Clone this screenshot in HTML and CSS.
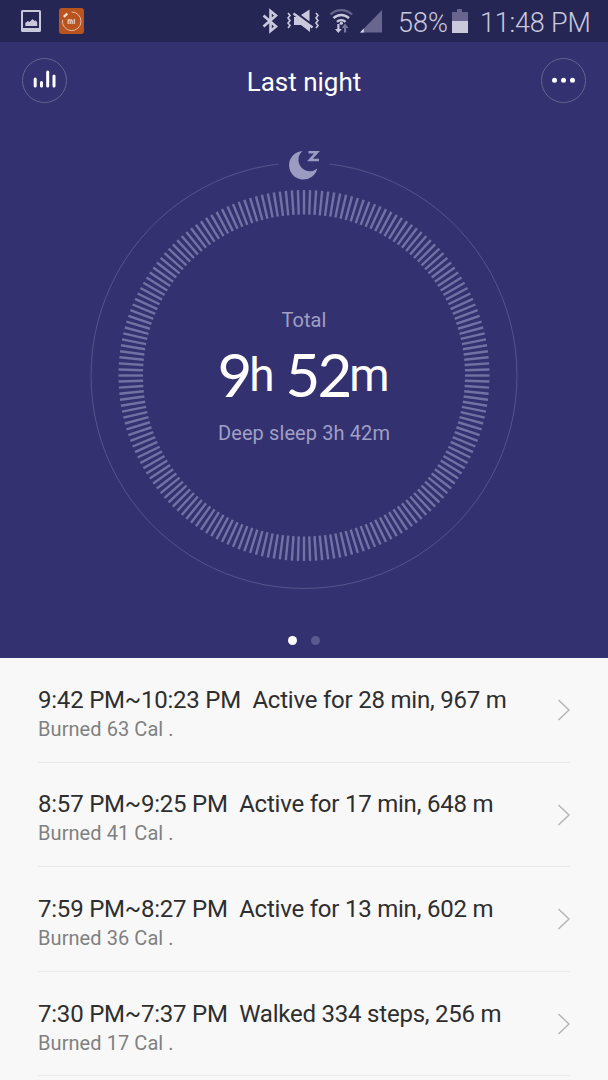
FILE: index.html
```html
<!DOCTYPE html>
<html lang="en">
<head>
  <meta charset="UTF-8">
  <title>Last night</title>
  <link rel="stylesheet" href="styles.css">
</head>
<body>
  <div class="status-bar">
    <svg class="status-left" width="70" height="42" viewBox="0 0 70 42">
      <path fill="#c9c8dd" fill-rule="evenodd" d="M2.500 10h17a1.500 1.500 0 0 1 1.500 1.500v19a1.500 1.500 0 0 1-1.500 1.500h-17a1.500 1.500 0 0 1-1.500-1.500v-19A1.500 1.500 0 0 1 2.500 10zM3 12v16h16V12z"/>
      <path fill="#c9c8dd" d="M5.300 26v-3l2.500-2 1.700 1 3-3 2 2 1.200-.7 1.500 2.200V26z"/>
      <rect x="39" y="8" width="25" height="26" rx="3" fill="#b9541f"/>
      <path d="M42.500 20A9.300 9.300 0 1 0 51.500 12" fill="none" stroke="#e0bba9" stroke-width="1"/>
      <path d="M43.800 16.800l3.500-3.300" stroke="#f3ded4" stroke-width="2.400"/>
      <path d="M48.200 24v-4h2.800q1.200 0 1.200 1.200V24M50.200 21v3M54.300 19v5" fill="none" stroke="#e9cdbf" stroke-width="1.300"/>
    </svg>
    <div class="status-right">
      <svg width="126" height="42" viewBox="258 0 126 42">
        <path d="M264.500 15.500l12.500 11-5.500 4.500V11l5.500 4.500-12.500 11" fill="none" stroke="#c9c8dd" stroke-width="2.600"/>
        <path d="M289 13l2 2.500-2 2.500 2 2.500-2 2.500 2 2.500-2 2.500M317 13l2 2.500-2 2.500 2 2.500-2 2.500 2 2.500-2 2.500" fill="none" stroke="#c9c8dd" stroke-width="1.600"/>
        <path d="M295 17h5l11 8.500v6.500l-9-7h-7zM302 15l8.500-5.500v12z" fill="#c9c8dd"/>
        <path d="M294.500 13.500l19 14" stroke="#c9c8dd" stroke-width="2.400"/>
        <g fill="none" stroke="#c9c8dd" stroke-width="2.400">
          <path d="M331.500 14.500a15.500 15.500 0 0 1 21.500 0" opacity=".4"/>
          <path d="M334.500 18.200a11 11 0 0 1 15.500 0M338 21.800a6.200 6.200 0 0 1 8.500 0"/>
        </g>
        <circle cx="342.300" cy="23.200" r="1.600" fill="#c9c8dd"/>
        <path d="M338.300 24h2.200v5h2.300l-3.500 4-3.300-4h2.300z" fill="#c9c8dd"/>
        <path d="M345 32.500h2.200v-4.500h2.300l-3.500-4.500-3.300 4.500h2.300z" fill="#77759c"/>
        <path d="M361 32.500L383 10v22.500z" fill="#68668f"/>
        <path d="M361 32.500l3.800-4v4z" fill="#d8d7e8"/>
      </svg>
      <span class="battery-level">58%</span>
      <svg class="battery" width="16" height="24" viewBox="0 0 16 24">
        <path d="M0 3h5V0h5v3h6v9H0z" fill="#68668f"/>
        <path d="M0 12h16v12H0z" fill="#c9c8dd"/>
      </svg>
      <span class="clock">11:48 PM</span>
    </div>
  </div>

  <div class="sleep">
    <div class="header">
      <button class="round-btn" aria-label="Statistics">
        <svg width="43" height="43" viewBox="0 0 43 43">
          <path d="M12.200 27v-7M18.500 27v-3.500M24.700 27V13M31 27V17" stroke="#fff" stroke-width="3" stroke-linecap="round"/>
        </svg>
      </button>
      <h1>Last night</h1>
      <button class="round-btn" aria-label="More">
        <svg width="43" height="43" viewBox="0 0 43 43" fill="#fff">
          <circle cx="12.500" cy="21.200" r="2.500"/>
          <circle cx="21.500" cy="21.200" r="2.500"/>
          <circle cx="30.500" cy="21.200" r="2.500"/>
        </svg>
      </button>
    </div>

    <div class="dial">
      <svg class="dial-ring" width="430" height="460" viewBox="89 140 430 460">
        <path d="M329.500 164A213 213 0 1 1 278.500 164" fill="none" stroke="#55548b" stroke-width="1"/>
        <g id="ticks" stroke="#7371a4" stroke-width="2.400"></g>
        <path d="M302.500 151A14.300 14.300 0 1 0 317.300 168.500A11 11 0 0 1 302.500 151z" fill="#9c9bc1"/>
        <path d="M308.500 152.200h8.500l-7 7.800h9" fill="none" stroke="#9c9bc1" stroke-width="2.600"/>
      </svg>
      <div class="summary">
        <p class="label">Total</p>
        <p class="total"><span class="num">9</span><span class="unit">h</span><span class="num second">52</span><span class="unit">m</span></p>
        <p class="label">Deep sleep 3h 42m</p>
      </div>
    </div>

    <div class="pager">
      <span class="dot active"></span>
      <span class="dot"></span>
    </div>
  </div>

  <ul class="activity">
    <li>
      <div class="entry">
        <p class="title">9:42 PM~10:23 PM&nbsp; Active for 28 min, 967 m</p>
        <p class="burned">Burned 63 Cal .</p>
      </div>
      <svg class="arrow" width="14" height="22" viewBox="0 0 14 22"><path d="M2.500 1l10.500 10-10.500 10"/></svg>
    </li>
    <li>
      <div class="entry">
        <p class="title">8:57 PM~9:25 PM&nbsp; Active for 17 min, 648 m</p>
        <p class="burned">Burned 41 Cal .</p>
      </div>
      <svg class="arrow" width="14" height="22" viewBox="0 0 14 22"><path d="M2.500 1l10.500 10-10.500 10"/></svg>
    </li>
    <li>
      <div class="entry">
        <p class="title">7:59 PM~8:27 PM&nbsp; Active for 13 min, 602 m</p>
        <p class="burned">Burned 36 Cal .</p>
      </div>
      <svg class="arrow" width="14" height="22" viewBox="0 0 14 22"><path d="M2.500 1l10.500 10-10.500 10"/></svg>
    </li>
    <li>
      <div class="entry">
        <p class="title">7:30 PM~7:37 PM&nbsp; Walked 334 steps, 256 m</p>
        <p class="burned">Burned 17 Cal .</p>
      </div>
      <svg class="arrow" width="14" height="22" viewBox="0 0 14 22"><path d="M2.500 1l10.500 10-10.500 10"/></svg>
    </li>
  </ul>

  <script>
    // Tick marks around the dial
    const TICKS = 192;
    const ticks = document.getElementById("ticks");
    for (let i = 0; i < TICKS; i++) {
      const line = document.createElementNS("http://www.w3.org/2000/svg", "line");
      line.setAttribute("x1", 304);
      line.setAttribute("x2", 304);
      line.setAttribute("y1", 190);
      line.setAttribute("y2", 214.5);
      line.setAttribute("transform", `rotate(${i * 360 / TICKS} 304 375.500)`);
      ticks.appendChild(line);
    }
  </script>
</body>
</html>
```
FILE: styles.css
```css
body {
  margin: 0;
  height: 1080px;
  overflow: hidden;
  background-color: #f8f8f8;
  font-family: Roboto, sans-serif;
}

p, h1, ul {
  margin: 0;
  padding: 0;
}

svg {
  display: block;
  flex-shrink: 0;
}

.status-bar {
  height: 42px;
  display: flex;
  justify-content: space-between;
  background-color: #262654;
  color: #c9c8dd;
}

.status-left {
  margin-left: 20px;
}

.status-right {
  display: flex;
  align-items: center;
  padding-right: 18px;
  font-size: 27px;
  font-weight: 300;
  line-height: 42px;
  white-space: nowrap;
}

.battery-level {
  width: 54px;
  padding-top: 3px;
  margin-left: 15px;
}

.battery {
  margin-right: 12px;
}

.clock {
  width: 110px;
  padding-top: 3px;
  letter-spacing: -0.2px;
}

.sleep {
  height: 616px;
  display: flex;
  flex-direction: column;
  align-items: center;
  background-color: #333170;
}

.header {
  width: 564px;
  height: 77px;
  display: flex;
  align-items: center;
  justify-content: space-between;
  color: #fff;
}

h1 {
  font-size: 26px;
  font-weight: 400;
  line-height: 30px;
  padding-top: 3px;
}

.round-btn {
  box-sizing: border-box;
  width: 45px;
  height: 45px;
  padding: 0;
  border: 1px solid #65638f;
  border-radius: 50%;
  background: none;
}

.dial {
  display: grid;
  margin-top: 21px;
  height: 460px;
}

.dial-ring, .summary {
  grid-area: 1 / 1;
}

.summary {
  padding-top: 168px;
  text-align: center;
}

.label {
  font-size: 20px;
  line-height: 24px;
  color: #a09fc4;
  letter-spacing: 0.1px;
}

.total {
  display: flex;
  justify-content: center;
  align-items: baseline;
  height: 89px;
  margin-right: 2px;
  line-height: 85px;
  color: #fff;
}

.num {
  font-family: Lato, sans-serif;
  font-size: 60px;
  letter-spacing: -3px;
}

.second {
  margin-left: 12px;
}

.unit {
  position: relative;
  top: -6px;
  font-size: 46px;
  letter-spacing: -1px;
}

.pager {
  display: flex;
  gap: 14px;
  margin-top: 36px;
}

.dot {
  width: 9px;
  height: 9px;
  border-radius: 50%;
  background-color: #5b5990;
}

.dot.active {
  background-color: #fff;
}

.activity {
  list-style: none;
  margin: 0 38px;
}

.activity li {
  box-sizing: border-box;
  height: 104.600px;
  padding-top: 1px;
  display: flex;
  align-items: center;
  justify-content: space-between;
  border-bottom: 1px solid #ebebeb;
  white-space: nowrap;
}

.entry {
  padding-top: 7px;
}

.title {
  font-size: 24px;
  line-height: 30px;
  color: #2e2e2e;
  letter-spacing: -0.22px;
}

.burned {
  font-size: 20px;
  line-height: 28px;
  color: #808080;
  letter-spacing: 0.07px;
}

.arrow path {
  fill: none;
  stroke: #b5b5b5;
  stroke-width: 1.500;
}
```
